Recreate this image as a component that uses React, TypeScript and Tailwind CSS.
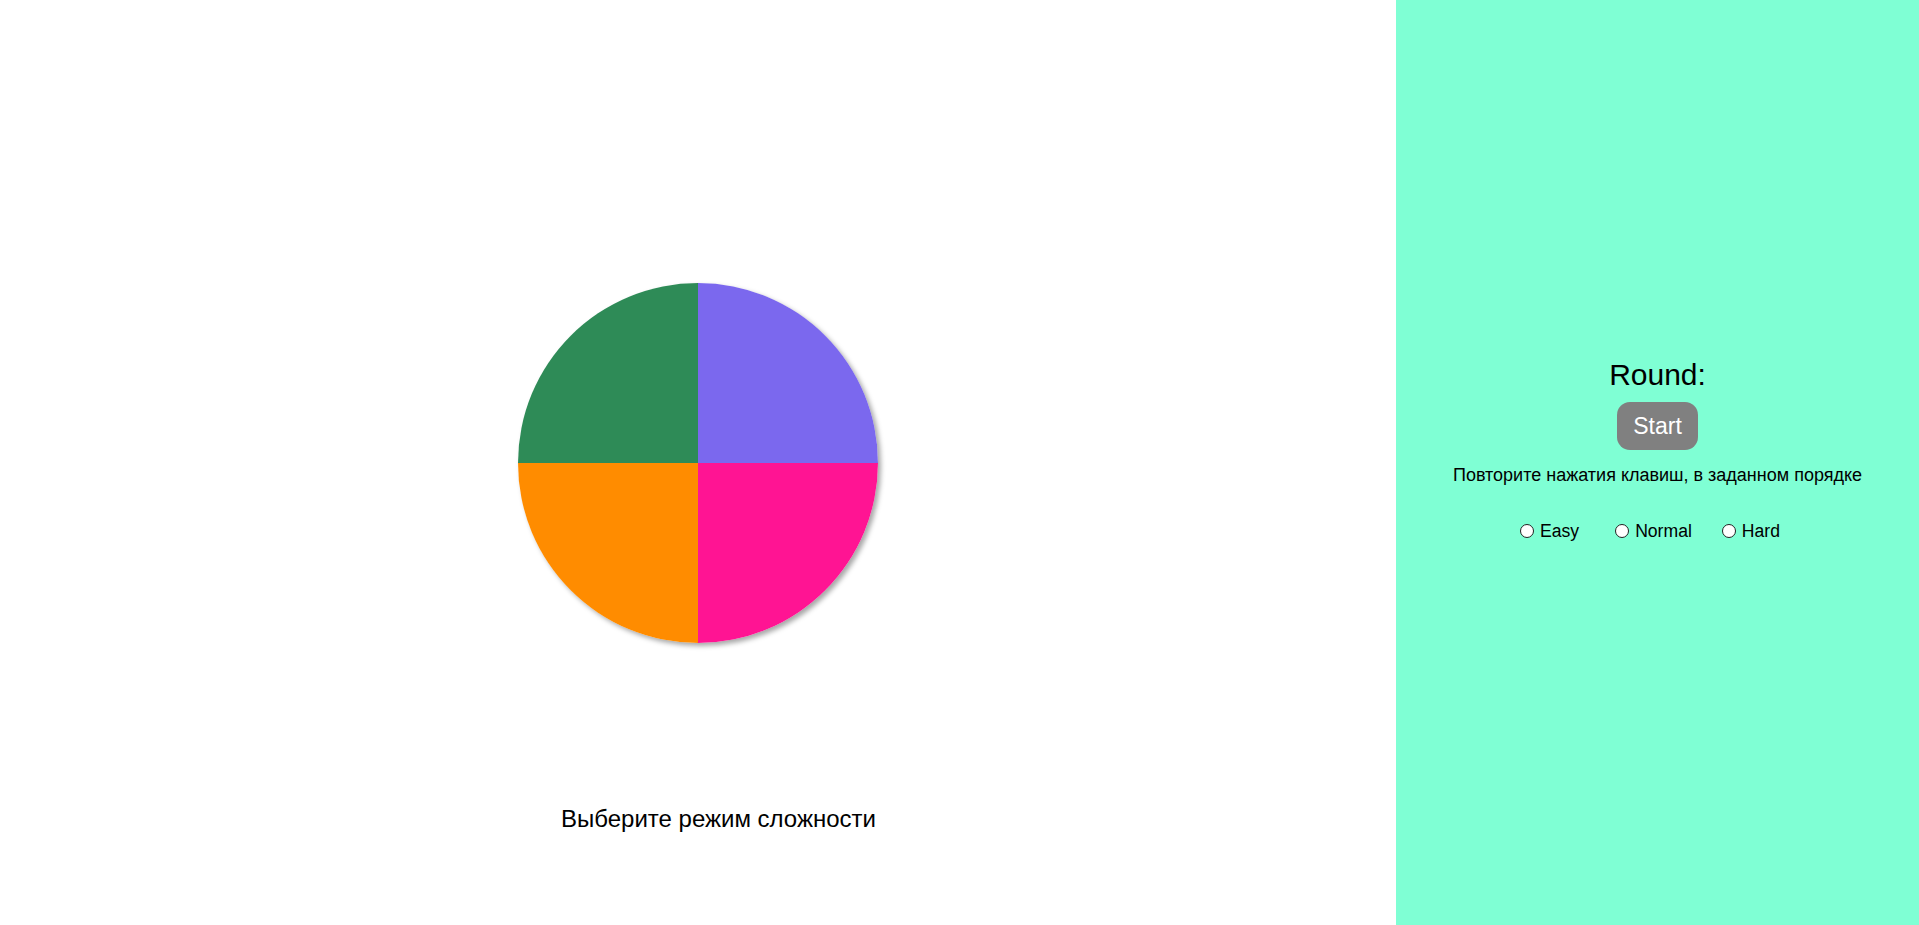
import React from "react";

function Radio({ label, className }: { label: string; className?: string }) {
  return (
    <label className={"flex items-center " + (className ?? "")}>
      <span className="w-[14px] h-[14px] rounded-full border border-[#222] bg-white shrink-0" />
      <span className="ml-[6px] text-[17.6px] leading-[20px] text-black">{label}</span>
    </label>
  );
}

export default function App() {
  return (
    <div
      className="flex w-full h-[925px] overflow-hidden bg-white"
      style={{ fontFamily: '"Liberation Sans", Arial, sans-serif' }}
    >
      <div className="flex-1 flex flex-col items-center pt-[283px]">
        <div className="w-[360px] h-[360px] rounded-full overflow-hidden grid grid-cols-2 grid-rows-2 shadow-[3px_3px_5px_rgba(0,0,0,0.35)]">
          <div className="bg-[#2e8b57]" />
          <div className="bg-[#7b68ee]" />
          <div className="bg-[#ff8c00]" />
          <div className="bg-[#ff1493]" />
        </div>
        <div className="mt-[162px] pl-[41px] text-[24px] leading-[28px] text-black">
          Выберите режим сложности
        </div>
      </div>
      <div className="w-[523px] shrink-0 bg-[#7fffd4] flex flex-col items-center pt-[358px]">
        <div className="text-[30px] leading-[34px] text-black">Round:</div>
        <button className="mt-[10px] h-[48px] px-[16px] rounded-[13px] bg-[#808080] text-white text-[23px] leading-[27px]">
          Start
        </button>
        <div className="mt-[15px] text-[18px] leading-[21px] text-black">
          Повторите нажатия клавиш, в заданном порядке
        </div>
        <div className="mt-[35px] self-stretch flex pl-[124px]">
          <Radio label="Easy" className="mr-[36px]" />
          <Radio label="Normal" className="mr-[30px]" />
          <Radio label="Hard" />
        </div>
      </div>
    </div>
  );
}
